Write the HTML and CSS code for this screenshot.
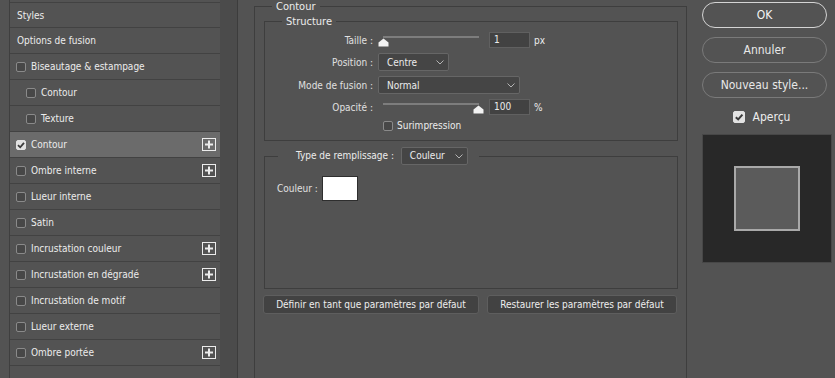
FILE: index.html
```html
<!DOCTYPE html>
<html lang="fr">
<head>
    <meta charset="UTF-8">
    <meta name="viewport" content="width=device-width, initial-scale=1.0">
    <title>Style de calque</title>
    <link rel="stylesheet" href="styles.css">
</head>
<body>
<div class="dialog">
    <!-- liste des effets -->
    <div class="sidebar">
        <ul class="effects">
            <li class="effect"><span class="name">Styles</span></li>
            <li class="effect"><span class="name">Options de fusion</span></li>
            <li class="effect check"><span class="box"></span><span class="name">Biseautage &amp; estampage</span></li>
            <li class="effect check sub"><span class="box"></span><span class="name">Contour</span></li>
            <li class="effect check sub"><span class="box"></span><span class="name">Texture</span></li>
            <li class="effect check active">
                <span class="box on"><svg width="8" height="8" viewBox="0 0 8 8"><path d="M1 4.2 L3.2 6.3 L7 1.8" fill="none" stroke="#3a3a3a" stroke-width="1.8"/></svg></span>
                <span class="name">Contour</span>
                <span class="plus"><svg width="14" height="13" viewBox="0 0 14 13"><rect x="0.5" y="0.5" width="13" height="12" fill="none" stroke="#ececec"/><path d="M7 2.5 V10.5 M3 6.5 H11" stroke="#ececec" stroke-width="2"/></svg></span>
            </li>
            <li class="effect check">
                <span class="box"></span><span class="name">Ombre interne</span>
                <span class="plus"><svg width="14" height="13" viewBox="0 0 14 13"><rect x="0.5" y="0.5" width="13" height="12" fill="none" stroke="#ececec"/><path d="M7 2.5 V10.5 M3 6.5 H11" stroke="#ececec" stroke-width="2"/></svg></span>
            </li>
            <li class="effect check"><span class="box"></span><span class="name">Lueur interne</span></li>
            <li class="effect check"><span class="box"></span><span class="name">Satin</span></li>
            <li class="effect check">
                <span class="box"></span><span class="name">Incrustation couleur</span>
                <span class="plus"><svg width="14" height="13" viewBox="0 0 14 13"><rect x="0.5" y="0.5" width="13" height="12" fill="none" stroke="#ececec"/><path d="M7 2.5 V10.5 M3 6.5 H11" stroke="#ececec" stroke-width="2"/></svg></span>
            </li>
            <li class="effect check">
                <span class="box"></span><span class="name">Incrustation en dégradé</span>
                <span class="plus"><svg width="14" height="13" viewBox="0 0 14 13"><rect x="0.5" y="0.5" width="13" height="12" fill="none" stroke="#ececec"/><path d="M7 2.5 V10.5 M3 6.5 H11" stroke="#ececec" stroke-width="2"/></svg></span>
            </li>
            <li class="effect check"><span class="box"></span><span class="name">Incrustation de motif</span></li>
            <li class="effect check"><span class="box"></span><span class="name">Lueur externe</span></li>
            <li class="effect check">
                <span class="box"></span><span class="name">Ombre portée</span>
                <span class="plus"><svg width="14" height="13" viewBox="0 0 14 13"><rect x="0.5" y="0.5" width="13" height="12" fill="none" stroke="#ececec"/><path d="M7 2.5 V10.5 M3 6.5 H11" stroke="#ececec" stroke-width="2"/></svg></span>
            </li>
        </ul>
        <div class="scroll"></div>
    </div>

    <!-- réglages du contour -->
    <div class="main">
        <fieldset class="group outer">
            <legend>Contour</legend>

            <fieldset class="group structure">
                <legend>Structure</legend>
                <div class="fields">
                    <div class="field">
                        <label>Taille :</label>
                        <div class="slider">
                            <span class="track"></span>
                            <svg class="thumb" width="11" height="9" viewBox="0 0 11 9"><path d="M5.5 0.5 L10.5 4.5 L10.5 8.5 L0.5 8.5 L0.5 4.5 Z" fill="#f2f2f2"/></svg>
                        </div>
                        <span class="num">1</span>
                        <span class="unit">px</span>
                    </div>
                    <div class="field tall">
                        <label>Position :</label>
                        <span class="select w-pos">Centre<svg width="8" height="5" viewBox="0 0 8 5"><path d="M0.5 0.5 L4 4 L7.5 0.5" fill="none" stroke="#b4b4b4"/></svg></span>
                    </div>
                    <div class="field tall">
                        <label>Mode de fusion :</label>
                        <span class="select w-mode">Normal<svg width="8" height="5" viewBox="0 0 8 5"><path d="M0.5 0.5 L4 4 L7.5 0.5" fill="none" stroke="#b4b4b4"/></svg></span>
                    </div>
                    <div class="field">
                        <label>Opacité :</label>
                        <div class="slider full">
                            <span class="track"></span>
                            <svg class="thumb" width="11" height="9" viewBox="0 0 11 9"><path d="M5.5 0.5 L10.5 4.5 L10.5 8.5 L0.5 8.5 L0.5 4.5 Z" fill="#f2f2f2"/></svg>
                        </div>
                        <span class="num">100</span>
                        <span class="unit">%</span>
                    </div>
                    <div class="field option">
                        <span class="box"></span><span class="name">Surimpression</span>
                    </div>
                </div>
            </fieldset>

            <fieldset class="group fill">
                <legend>Type de remplissage : <span class="select w-fill">Couleur<svg width="8" height="5" viewBox="0 0 8 5"><path d="M0.5 0.5 L4 4 L7.5 0.5" fill="none" stroke="#b4b4b4"/></svg></span></legend>
                <div class="fill-body">
                    <label>Couleur :</label>
                    <span class="swatch"></span>
                </div>
            </fieldset>

            <div class="defaults">
                <button class="flat w-set">Définir en tant que paramètres par défaut</button>
                <button class="flat w-reset">Restaurer les paramètres par défaut</button>
            </div>
        </fieldset>
    </div>

    <!-- boutons et aperçu -->
    <div class="actions">
        <button class="pill primary">OK</button>
        <button class="pill">Annuler</button>
        <button class="pill">Nouveau style...</button>
        <div class="preview-toggle">
            <span class="box big on"><svg width="10" height="10" viewBox="0 0 10 10"><path d="M1.8 5.2 L4.2 7.4 L8.4 2.6" fill="none" stroke="#3a3a3a" stroke-width="2"/></svg></span>
            <span>Aperçu</span>
        </div>
        <div class="preview">
            <div class="preview-shape"></div>
        </div>
    </div>
</div>
</body>
</html>
```

FILE: styles.css
```css
body {
    margin: 0;
    background-color: #535353;
    font-family: "DejaVu Sans Condensed", "DejaVu Sans", sans-serif;
    font-stretch: condensed;
    font-size: 10px;
    color: #ececec;
    overflow: hidden;
}
.dialog {
    display: flex;
    height: 378px;
    overflow: hidden;
}

/* sidebar */
.sidebar {
    display: flex;
    width: 238px;
    flex-shrink: 0;
}
.effects {
    list-style: none;
    margin: 0 0 0 9px;
    padding: 2px 0 0;
    width: 210px;
    border-left: 1px solid #3f3f3f;
}
.effect {
    display: flex;
    align-items: center;
    box-sizing: border-box;
    height: 26px;
    padding: 0 4px 0 7px;
    border-bottom: 1px solid #424242;
}
.effect:first-child {
    border-top: 1px solid #424242;
}
.effect.check {
    padding-left: 6px;
}
.effect.sub {
    padding-left: 16px;
}
.effect.active {
    background-color: #6b6b6b;
}
.box {
    display: flex;
    align-items: center;
    justify-content: center;
    width: 8px;
    height: 8px;
    border: 1px solid #8a8a8a;
    border-radius: 2px;
    background-color: #474747;
    margin-right: 5px;
    flex-shrink: 0;
}
.box.on {
    background-color: #e2e2e2;
    border-color: #e2e2e2;
}
.box.big {
    width: 10px;
    height: 10px;
    margin-right: 8px;
}
.plus {
    display: flex;
    margin-left: auto;
}
.scroll {
    width: 17px;
    background-color: #4b4b4b;
    border-right: 1px solid #3c3c3c;
}

/* main panel */
.main {
    width: 449px;
    flex-shrink: 0;
}
.group {
    margin: 0;
    padding: 0;
    min-width: 0;
    border: 1px solid #3e3e3e;
}
.group > legend {
    padding: 0 4px;
    margin-left: 17px;
    line-height: 13px;
    font-size: 11px;
}
.outer {
    margin-left: 16px;
    height: 380px;
    border-bottom: none;
    padding: 2px 8px 0 9px;
}
.outer > legend {
    margin-left: 8px;
}
.fields {
    display: flex;
    flex-direction: column;
    gap: 5px;
    padding: 4px 0 9px;
}
.field {
    display: flex;
    align-items: center;
    height: 16px;
}
.field.tall {
    height: 18px;
}
.field label {
    width: 108px;
    margin-right: 5px;
    text-align: right;
    color: #e0e0e0;
}
.field.option {
    height: 11px;
    padding-left: 118px;
}
.field.option .box {
    margin-right: 4px;
}
.slider {
    position: relative;
    width: 106px;
    height: 16px;
    margin-right: 5px;
}
.slider .track {
    position: absolute;
    left: 5px;
    right: 5px;
    top: 4px;
    height: 2px;
    background-color: #7d7d7d;
}
.slider .thumb {
    position: absolute;
    top: 6px;
    left: 0;
}
.slider.full .thumb {
    left: 95px;
}
.num {
    box-sizing: border-box;
    width: 41px;
    height: 16px;
    line-height: 14px;
    padding-left: 4px;
    background-color: #424242;
    border: 1px solid #606060;
}
.unit {
    margin-left: 4px;
}
.select {
    display: inline-flex;
    align-items: center;
    justify-content: space-between;
    box-sizing: border-box;
    height: 18px;
    padding: 0 4px 0 8px;
    background-color: #454545;
    border: 1px solid #666;
    border-radius: 2px;
    vertical-align: middle;
}
.w-pos {
    width: 71px;
}
.w-mode {
    width: 142px;
}
.w-fill {
    width: 67px;
    margin-left: 4px;
}
.fill {
    margin-top: 6px;
}
.fill > legend {
    margin-left: 13px;
    padding: 0 11px 0 18px;
    line-height: 18px;
    font-size: 10px;
}
.fill-body {
    display: flex;
    align-items: center;
    height: 25px;
    padding: 11px 0 87px 12px;
}
.fill-body label {
    margin-right: 4px;
    color: #e0e0e0;
}
.swatch {
    box-sizing: border-box;
    width: 36px;
    height: 25px;
    background-color: #fff;
    border: 1px solid #2e2e2e;
}
.defaults {
    display: flex;
    gap: 8px;
    margin: 6px 0 0 -1px;
}
.flat {
    height: 19px;
    padding: 0;
    font-family: inherit;
    font-stretch: condensed;
    font-size: 10px;
    color: #eee;
    background-color: #424242;
    border: 1px solid #5e5e5e;
    border-radius: 3px;
}
.w-set {
    width: 216px;
}
.w-reset {
    width: 190px;
}

/* right column */
.actions {
    display: flex;
    flex-direction: column;
    box-sizing: border-box;
    width: 148px;
    padding: 2px 0 0 15px;
}
.pill {
    width: 125px;
    height: 26px;
    margin-bottom: 9px;
    padding: 0;
    font-family: inherit;
    font-stretch: condensed;
    font-size: 12px;
    color: #e8e8e8;
    background: transparent;
    border: 1px solid #7a7a7a;
    border-radius: 13px;
}
.pill.primary {
    color: #f4f4f4;
    border-color: #d4d4d4;
}
.preview-toggle {
    display: flex;
    align-items: center;
    justify-content: center;
    width: 125px;
    height: 13px;
    margin-top: 3px;
    padding-right: 6px;
    box-sizing: border-box;
    font-size: 12px;
}
.preview {
    display: flex;
    align-items: center;
    justify-content: center;
    box-sizing: border-box;
    width: 130px;
    height: 129px;
    margin-top: 11px;
    background-color: #282828;
    border: 1px solid #474747;
}
.preview-shape {
    box-sizing: border-box;
    width: 66px;
    height: 65px;
    background-color: #5b5b5b;
    border: 2px solid #a9a9a9;
}
```
